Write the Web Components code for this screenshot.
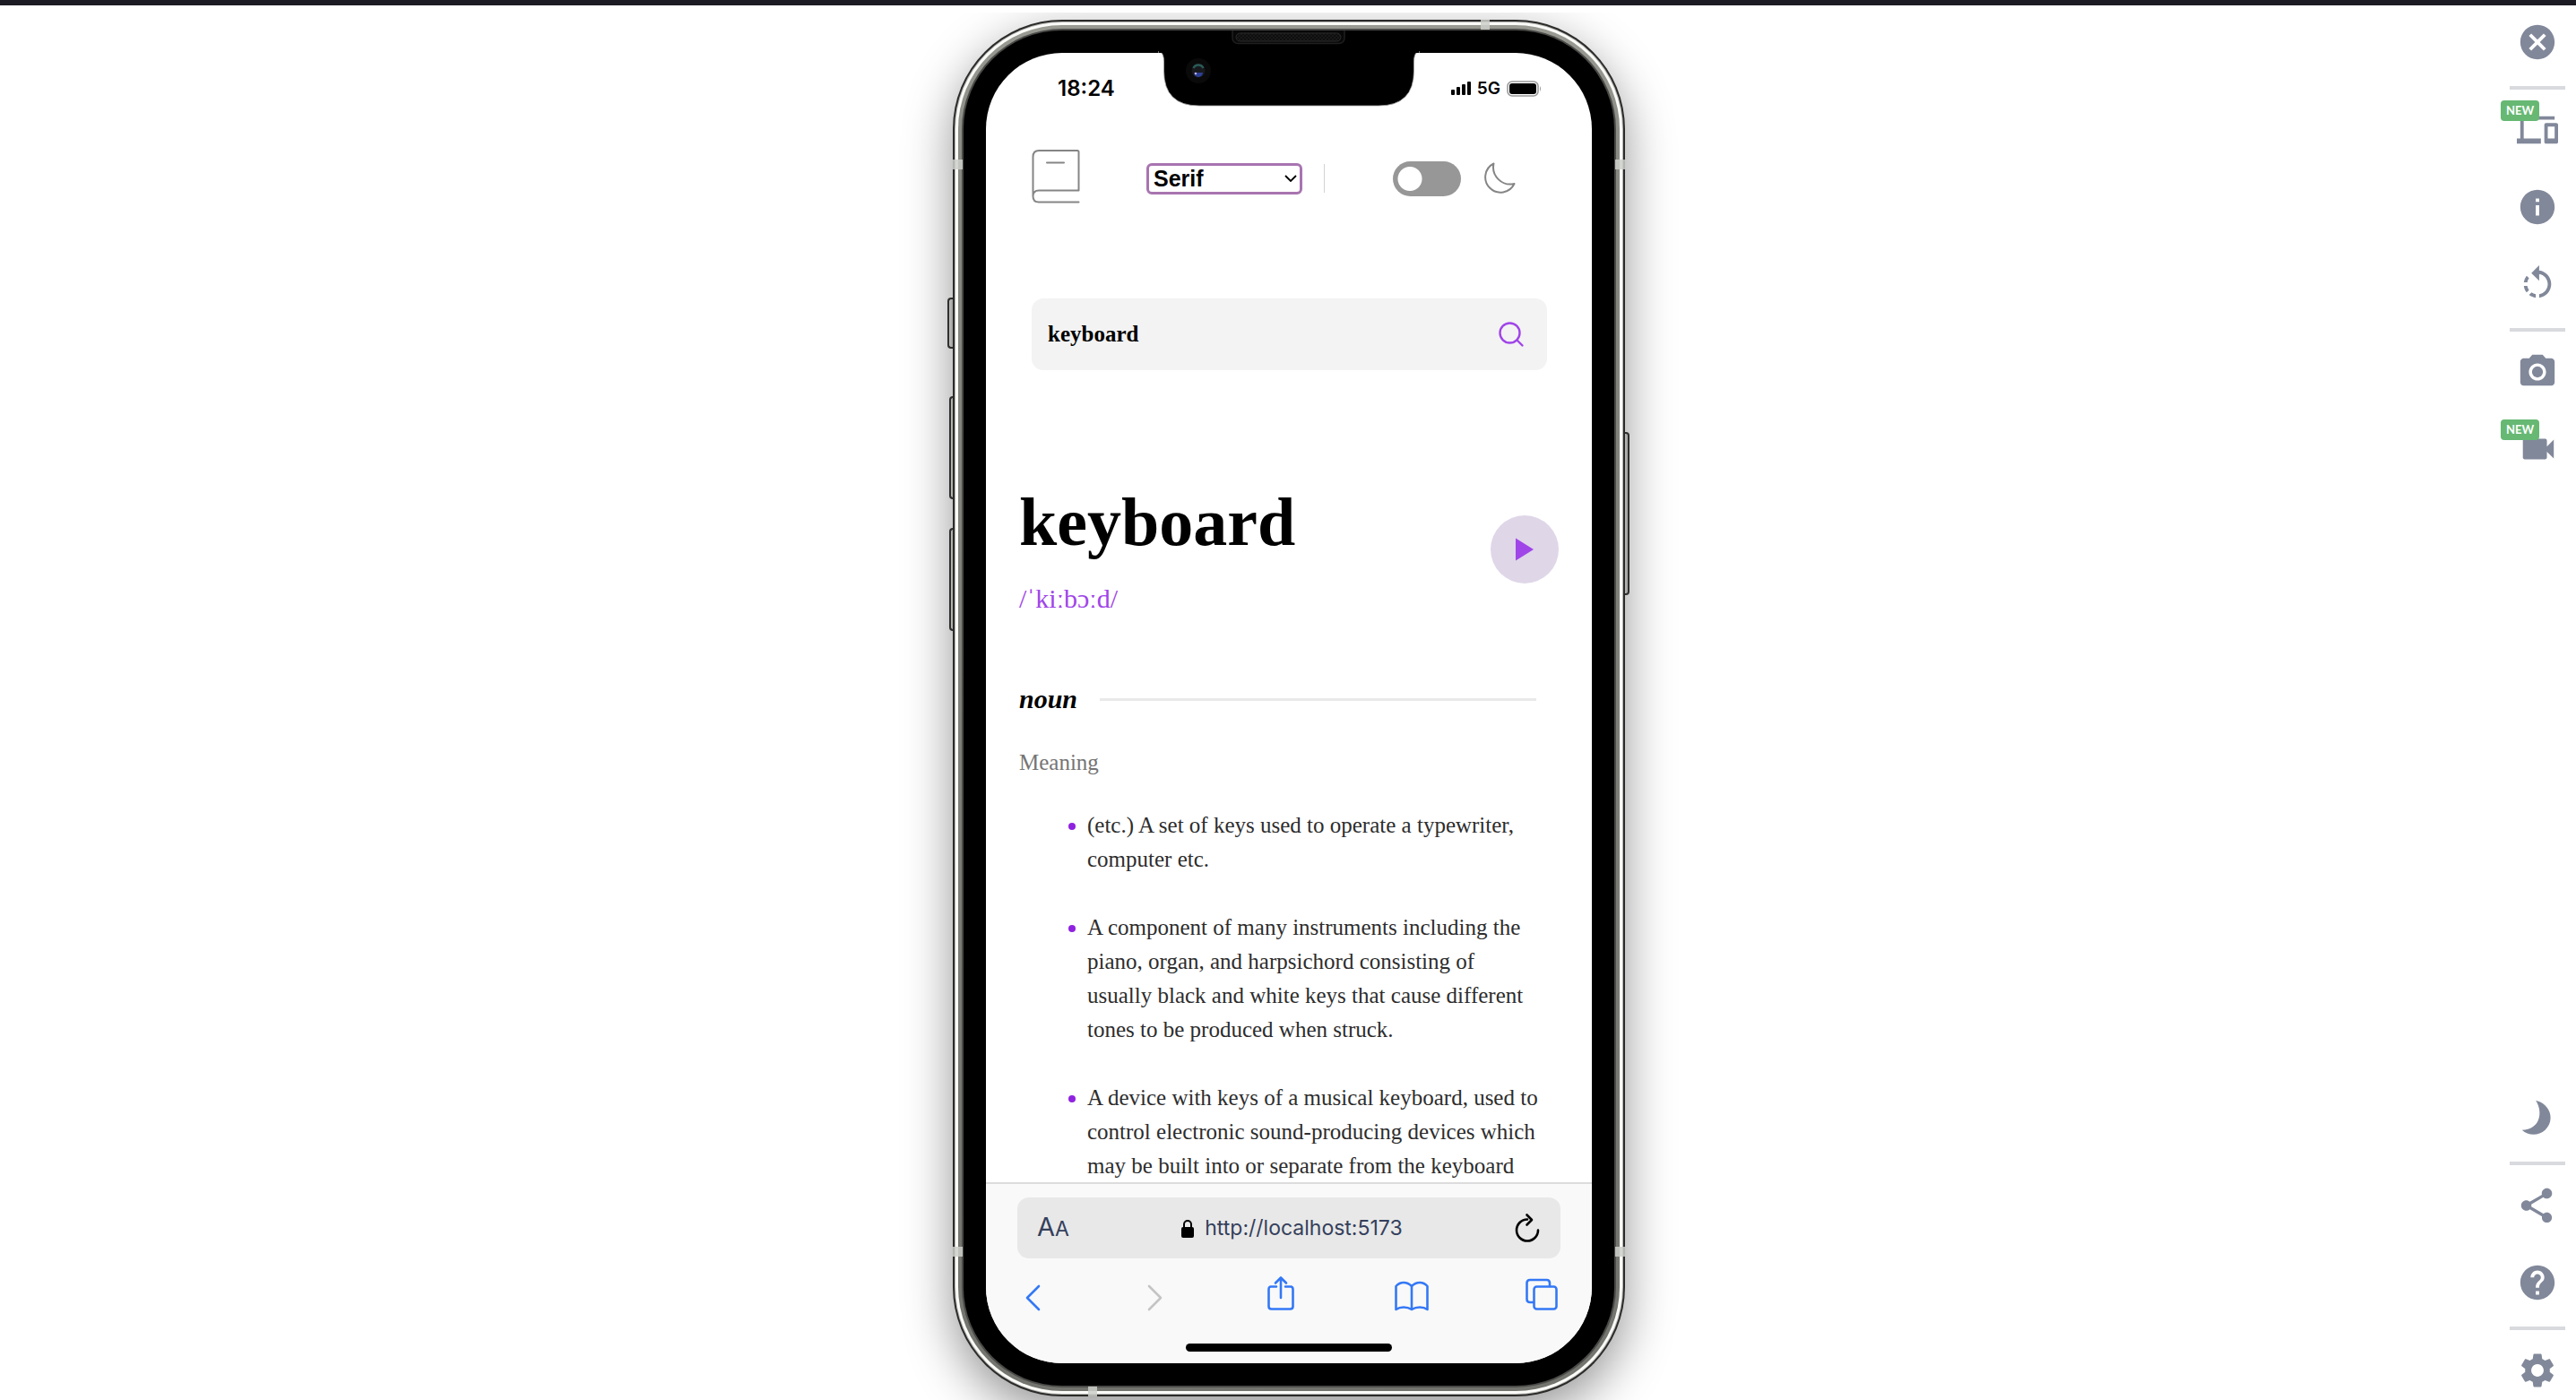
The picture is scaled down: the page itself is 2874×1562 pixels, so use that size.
<!DOCTYPE html>
<html lang="en">
<head>
<meta charset="utf-8">
<title>Mobile simulator</title>
<style>
  body { margin: 0; background: #fff; overflow: hidden; font-family: "Liberation Sans", Arial, sans-serif; }
</style>
</head>
<body>
<simulator-page>
  <phone-device>
    <dictionary-app></dictionary-app>
  </phone-device>
  <tool-rail slot="tools"></tool-rail>
</simulator-page>

<script>
const define = (name, html) => {
  const template = document.createElement('template');
  template.innerHTML = html;
  customElements.define(name, class extends HTMLElement {
    constructor() {
      super();
      this.attachShadow({ mode: 'open' }).append(template.content.cloneNode(true));
    }
  });
};
const reset = `*{box-sizing:border-box} button{border:0;padding:0;margin:0;background:none;font:inherit;color:inherit;cursor:pointer;display:block} svg{display:block}`;

define('simulator-page', `
<style>${reset}
  :host { display: flex; flex-direction: column; height: 100vh; border-top: 6px solid #1c1a22; padding-top: 8px; box-sizing: border-box; }
  main { flex: 1; min-height: 0; display: grid; grid-template-columns: 1fr auto 1fr; padding: 8px 0 4px 2px; overflow: hidden; }
  .device { grid-column: 2; min-height: 0; }
  aside { grid-column: 3; justify-self: end; margin-top: -8px; min-height: 0; }
</style>
<main><div class="device"><slot></slot></div><aside><slot name="tools"></slot></aside></main>`);

define('phone-device', `
<style>${reset}
  :host { display: block; position: relative; height: calc(100vh - 26px); aspect-ratio: 750 / 1536; }
  .rim { position: relative; height: 100%; border-radius: 122px; padding: 2px; background: #2b2b2a; box-shadow: 0 18px 54px rgba(0,0,0,.42); }
  .shine { height: 100%; border-radius: 120px; padding: 1px; background: #b4b4b0; }
  .white { height: 100%; border-radius: 119px; padding: 3px; background: #fafaf8; }
  .steel { height: 100%; border-radius: 116px; padding: 4px; background: linear-gradient(#999b93, #878980 12%, #73746e); }
  .edge { height: 100%; border-radius: 112px; padding: 2px; background: #4a4a48; }
  .bezel { height: 100%; border-radius: 110px; padding: 25px; background: #000; }
  .screen { position: relative; height: 100%; border-radius: 85px; background: #fff; overflow: hidden; display: flex; flex-direction: column; }
  .content { flex: 1; min-height: 0; overflow: hidden; }
  .key { position: absolute; border: 2px solid #3b3b3a; background: linear-gradient(90deg, #e9e9e6, #c9c9c6); }
  .key.l { border-right: 0; border-radius: 4px 0 0 4px; }
  .key.r { border-left: 0; border-radius: 0 4px 4px 0; left: 100%; width: 5px; }
  .mute { left: -6px; width: 7px; top: 310px; height: 57px; }
  .up { left: -4px; width: 5px; top: 420px; height: 115px; }
  .down { left: -4px; width: 5px; top: 567px; height: 115px; }
  .power { top: 460px; height: 182px; }
  .band { position: absolute; background: rgba(205,207,202,.85); }
  .side { width: 11px; height: 11px; }
  .cap { width: 10px; height: 11px; }
  .notch { position: absolute; top: 11px; left: 50%; margin-left: -150px; z-index: 2; }
  .status { flex: none; height: 79px; display: flex; align-items: center; justify-content: space-between; padding: 0 56px 0 80px; font-family: Inter, sans-serif; }
  .time { font-size: 24px; font-weight: 600; line-height: 30px; }
  .signals { display: flex; align-items: center; gap: 7px; font-size: 19px; font-weight: 600; line-height: 24px; }
</style>
<span class="key l mute"></span><span class="key l up"></span><span class="key l down"></span><span class="key r power"></span>
<div class="rim"><div class="shine"><div class="white"><div class="steel"><div class="edge"><div class="bezel">
  <div class="screen">
    <div class="status">
      <span class="time">18:24</span>
      <span class="signals">
        <svg width="22" height="15" viewBox="0 0 22 15"><rect x="0" y="9" width="4" height="6" rx="1"/><rect x="6" y="6" width="4" height="9" rx="1"/><rect x="12" y="3" width="4" height="12" rx="1"/><rect x="18" y="0" width="4" height="15" rx="1"/></svg>
        <span>5G</span>
        <svg width="39" height="18" viewBox="0 0 39 18"><rect x="1" y="1" width="34" height="16" rx="5" fill="none" stroke="#999" stroke-width="1.6"/><rect x="3" y="3" width="30" height="12" rx="3"/><path d="M37 6q2 3 0 6z" fill="#999"/></svg>
      </span>
    </div>
    <div class="content"><slot></slot></div>
    <safari-bar></safari-bar>
  </div>
</div></div></div></div></div></div>
<span class="band side" style="left:0;top:156px"></span><span class="band side" style="right:0;top:156px"></span>
<span class="band side" style="left:0;bottom:156px"></span><span class="band side" style="right:0;bottom:156px"></span>
<span class="band cap" style="right:151px;top:0"></span><span class="band cap" style="left:151px;bottom:0"></span>
<svg class="notch" width="300" height="90" viewBox="0 0 300 90">
  <defs><pattern id="mesh" width="4" height="4" patternUnits="userSpaceOnUse"><rect width="4" height="4" fill="#0e0e0e"/><circle cx="1" cy="1" r=".8" fill="#262626"/><circle cx="3" cy="3" r=".8" fill="#262626"/></pattern></defs>
  <path d="M4 25H6Q10.500 26 10.500 36V46Q10.500 85 50 85H250Q289.500 85 289.500 46V36Q289.500 26 294 25H296Z" fill="#000" stroke="#aaa" stroke-width=".8"/>
  <rect x="5" y="3" width="290" height="23" fill="#000"/>
  <path d="M87 1V9Q87 15.500 94 15.500H205Q212 15.500 212 9V1" fill="#080808" stroke="#1f1f1f" stroke-width="1.500"/>
  <rect x="91" y="4" width="117" height="9" rx="4.500" fill="url(#mesh)" stroke="#2b2b2b" stroke-width="1"/>
  <circle cx="49" cy="46" r="14" fill="#0a0a0b"/><circle cx="49" cy="46" r="7.500" fill="#17191d"/>
  <path d="M43.500 43a6 6 0 0 1 11 0" fill="none" stroke="#2b5a56" stroke-width="2.500"/><path d="M44 48a5 5 0 0 0 10 0z" fill="#2c3f94"/><circle cx="46" cy="49" r="1.200" fill="#cdb4e6"/>
</svg>`);

define('safari-bar', `
<style>${reset}
  :host { flex: none; display: flex; flex-direction: column; align-items: stretch; height: 202px; box-sizing: border-box; border-top: 2px solid #dcdcdc; background: #f9f9f9; padding: 15px 35px 0; font-family: Inter, sans-serif; color: #34405c; }
  .address { height: 68px; border-radius: 13px; background: #e8e8e8; display: flex; justify-content: space-between; align-items: center; padding: 0 23px 0 22px; }
  .text { font-size: 29px; line-height: 36px; }
  .text small { font-size: 23px; }
  .url { display: flex; align-items: center; gap: 12px; font-size: 23px; line-height: 32px; }
  nav { display: grid; grid-template-columns: 136fr 134fr 143fr 146fr 35fr; padding: 19px 3px 0 9px; color: #3478f6; }
  svg.line { fill: none; stroke: currentColor; stroke-width: 2.600; stroke-linecap: round; stroke-linejoin: round; }
  .off { color: #c4c4c6; }
  .home { width: 230px; height: 9px; border-radius: 5px; background: #000; margin: 36px auto 0; }
</style>
<div class="address">
  <button class="text" aria-label="Text size">A<small>A</small></button>
  <span class="url"><svg width="14" height="21" viewBox="0 0 14 21"><path d="M3 10V6a4 4 0 0 1 8 0v4" fill="none" stroke="#000" stroke-width="2"/><rect y="9" width="14" height="12" rx="2"/></svg><span>http://localhost:5173</span></span>
  <button class="reload" aria-label="Reload"><svg class="line" style="color:#000" width="28" height="34" viewBox="0 0 28 34"><path d="M14 7.500A12 12 0 1 0 26 19.500M13.500 2.500l5.500 5.500-5.500 5.500"/></svg></button>
</div>
<nav aria-label="Browser">
  <button aria-label="Back"><svg class="line" width="17" height="40" viewBox="0 0 17 40"><path d="M15 12L2 25l13 13"/></svg></button>
  <button class="off" aria-label="Forward" disabled><svg class="line" width="17" height="40" viewBox="0 0 17 40"><path d="M2 12l13 13L2 38"/></svg></button>
  <button aria-label="Share"><svg class="line" width="30" height="40" viewBox="0 0 30 40"><path d="M10 12.500H4q-2.500 0-2.500 3V34.500q0 3 3 3h21q3 0 3-3V15.500q0-3-2.500-3h-6M15 25V3M9 8.500L15 2.500l6 6"/></svg></button>
  <button aria-label="Bookmarks"><svg class="line" width="38" height="40" viewBox="0 0 38 40"><path d="M19 12Q15 8 10 8T1.500 12V38Q5 35.500 10 35.500T19 38Q23 35.500 28 35.500T36.500 38V12Q33 8 28 8T19 12ZM19 12V38"/></svg></button>
  <button aria-label="Tabs"><svg class="line" width="36" height="40" viewBox="0 0 36 40"><rect x="9.500" y="12.500" width="25" height="25" rx="3"/><path d="M9 30H5q-3.500 0-3.500-3.500V8.500Q1.500 5 5 5H23.500Q27 5 27 8.500V12"/></svg></button>
</nav>
<div class="home"></div>`);

define('dictionary-app', `
<style>${reset}
  :host { display: block; font-family: "Liberation Serif", "Times New Roman", serif; color: #000; }
  header { display: flex; align-items: center; padding: 28px 0 0 51px; }
  select { appearance: none; width: 174px; height: 35px; margin-left: 74px; padding: 0 5px; border: 3px solid #a874b0; border-radius: 6px; background: #fff url("data:image/svg+xml,%3Csvg xmlns='http://www.w3.org/2000/svg' width='14' height='8'%3E%3Cpath d='M1 1l6 6 6-6' fill='none' stroke='%23000' stroke-width='1.8'/%3E%3C/svg%3E") no-repeat right 3px center; font: bold 25px/29px "Liberation Sans", Arial, sans-serif; color: #000; }
  .rule { width: 1px; height: 32px; background: #d3d3d3; margin-left: 24px; }
  .switch { appearance: none; width: 76px; height: 39px; margin: 0 0 0 76px; border-radius: 20px; background: radial-gradient(circle at 19px 50%, #fff 13px, #979797 14px); }
  .moon { margin-left: 25px; }
  form { height: 80px; margin: 101px 50px 0 51px; padding: 0 24px 0 18px; border-radius: 13px; background: #f3f3f3; display: flex; align-items: center; }
  input[type=search] { appearance: none; flex: 1; min-width: 0; border: 0; padding: 0; background: none; outline: 0; font: bold 25px/32px "Liberation Serif", serif; color: #000; }
  .word { display: flex; align-items: center; justify-content: space-between; margin-top: 125px; padding: 0 37px; }
  h1 { margin: 0; font-size: 76px; line-height: 88px; }
  .phonetic { margin: 22px 0 0; font-size: 30px; line-height: 40px; color: #a045e8; }
  h2 { margin: 72px 62px 0 37px; display: flex; align-items: center; gap: 25px; font-size: 30px; line-height: 40px; font-style: italic; }
  h2::after { content: ""; flex: 1; height: 3px; background: #e9e9e9; }
  h3 { margin: 32px 37px 0; font-size: 25px; line-height: 38px; font-weight: 400; color: #757575; }
  ul { list-style: none; margin: 32px 57px 0 0; padding: 0 0 0 92px; font-size: 25px; line-height: 38px; color: #2d2d2d; }
  li { display: flex; gap: 13px; margin-bottom: 38px; }
  li::before { content: ""; flex: none; width: 8px; height: 8px; margin-top: 16px; border-radius: 50%; background: #8f22e0; }
</style>
<header>
  <svg width="54" height="66" viewBox="0 0 54 66" fill="none" stroke="#858585" stroke-width="2" stroke-linecap="round" stroke-linejoin="round"><path d="M52.500 59.500H8Q1.500 59.500 1.500 53V9Q1.500 2 8 2H51Q52.500 2 52.500 3.500V46.500H8Q1.500 46.500 1.500 53M17 15.500H36"/></svg>
  <select aria-label="Font"><option>Serif</option><option>Sans Serif</option><option>Mono</option></select>
  <span class="rule"></span>
  <input class="switch" type="checkbox" role="switch" aria-label="Dark theme">
  <svg class="moon" width="36" height="36" viewBox="0 0 36 36" fill="none" stroke="#858585" stroke-width="2" stroke-linejoin="round"><path d="M11.500 1.500A19 19 0 0 0 34.500 24A17 17 0 1 1 11.500 1.500Z"/></svg>
</header>
<form role="search">
  <input type="search" aria-label="Word" value="keyboard">
  <button type="button" aria-label="Search"><svg width="32" height="32" viewBox="0 0 32 32" fill="none" stroke="#a045e8" stroke-width="2.400" stroke-linecap="round"><circle cx="14.500" cy="14.500" r="11"/><path d="M22.500 22.500L28.500 28.500"/></svg></button>
</form>
<section class="word">
  <div><h1>keyboard</h1><p class="phonetic">/ˈkiːbɔːd/</p></div>
  <button aria-label="Play pronunciation"><svg width="76" height="76" viewBox="0 0 76 76"><circle cx="38" cy="38" r="38" fill="#dfd6e8"/><path d="M28 25.500V50.500L48 38Z" fill="#a045e8"/></svg></button>
</section>
<h2>noun</h2>
<h3>Meaning</h3>
<ul>
  <li>(etc.) A set of keys used to operate a typewriter, computer etc.</li>
  <li>A component of many instruments including the piano, organ, and harpsichord consisting of usually black and white keys that cause different tones to be produced when struck.</li>
  <li>A device with keys of a musical keyboard, used to control electronic sound-producing devices which may be built into or separate from the keyboard</li>
</ul>`);

define('new-badge', `
<style>
  :host { position: absolute; left: -18px; top: -10px; display: block; width: 43px; border-radius: 4px; background: #66b873; color: #fff; font: 700 13px/23px Lato, sans-serif; text-align: center; }
</style><slot></slot>`);

define('tool-rail', `
<style>${reset}
  :host { display: flex; flex-direction: column; justify-content: space-between; height: calc(100vh - 14px); padding: 10px 12px 10px 0; box-sizing: border-box; color: #81889a; }
  div { display: flex; flex-direction: column; align-items: center; gap: 40px; width: 62px; }
  hr { width: 62px; height: 4px; margin: -14px 0 -18px; border: 0; background: #d9dade; }
  button { position: relative; width: 46px; height: 46px; }
  svg { width: 46px; height: 46px; fill: currentColor; }
</style>
<div>
  <button aria-label="Close"><svg viewBox="0 0 24 24"><path d="M12 2C6.470 2 2 6.470 2 12s4.470 10 10 10 10-4.470 10-10S17.530 2 12 2zm5 13.590L15.590 17 12 13.410 8.410 17 7 15.590 10.590 12 7 8.410 8.410 7 12 10.590 15.590 7 17 8.410 13.410 12 17 15.590z"/></svg></button>
  <hr>
  <button aria-label="Devices"><svg viewBox="0 0 24 24"><path d="M4 6h18V4H4c-1.100 0-2 .9-2 2v11H0v3h14v-3H4V6zm19 2h-6c-.550 0-1 .450-1 1v10c0 .550.450 1 1 1h6c.550 0 1-.450 1-1V9c0-.550-.450-1-1-1zm-1 9h-4v-7h4v7z"/></svg><new-badge>NEW</new-badge></button>
  <button aria-label="Information"><svg viewBox="0 0 24 24"><path d="M12 2C6.480 2 2 6.480 2 12s4.480 10 10 10 10-4.480 10-10S17.520 2 12 2zm1 15h-2v-6h2v6zm0-8h-2V7h2v2z"/></svg></button>
  <button aria-label="Rotate"><svg viewBox="0 0 24 24"><path d="M7.110 8.530L5.700 7.110C4.800 8.270 4.240 9.610 4.070 11h2.020c.14-.870.490-1.720 1.020-2.470zM6.090 13H4.070c.17 1.390.720 2.730 1.620 3.890l1.410-1.420c-.520-.750-.870-1.590-1.010-2.470zm1.010 5.320c1.160.9 2.510 1.440 3.900 1.610V17.900c-.870-.150-1.710-.490-2.460-1.030L7.100 18.320zM13 4.070V1L8.450 5.550 13 10V6.090c2.840.480 5 2.940 5 5.910s-2.160 5.430-5 5.910v2.020c3.950-.490 7-3.850 7-7.930s-3.050-7.440-7-7.930z"/></svg></button>
  <hr>
  <button aria-label="Screenshot"><svg viewBox="0 0 24 24"><circle cx="12" cy="12" r="3.200"/><path d="M9 2L7.170 4H4c-1.100 0-2 .9-2 2v12c0 1.100.9 2 2 2h16c1.100 0 2-.9 2-2V6c0-1.100-.9-2-2-2h-3.170L15 2H9zm3 15c-2.760 0-5-2.240-5-5s2.240-5 5-5 5 2.240 5 5-2.240 5-5 5z"/></svg></button>
  <button aria-label="Record video"><svg viewBox="0 0 24 24"><path d="M17 10.500V7c0-.550-.450-1-1-1H4c-.550 0-1 .450-1 1v10c0 .550.450 1 1 1h12c.550 0 1-.450 1-1v-3.500l4 4v-11l-4 4z" transform="translate(.5 0)"/></svg><new-badge>NEW</new-badge></button>
</div>
<div>
  <button aria-label="Dark mode"><svg viewBox="0 0 24 24"><path d="M11 2C15.500 9 13.500 19 3 19.200C6.500 22.500 12.500 22.800 16.500 19.200C22.500 13.500 19.500 4 11 2Z"/></svg></button>
  <hr>
  <button aria-label="Share"><svg viewBox="0 0 24 24"><path d="M18 16.080c-.760 0-1.440.3-1.960.770L8.910 12.700c.050-.230.090-.460.090-.7s-.040-.470-.090-.7l7.050-4.110c.540.5 1.250.810 2.040.810 1.660 0 3-1.340 3-3s-1.340-3-3-3-3 1.340-3 3c0 .240.040.470.090.7L8.040 9.810C7.500 9.310 6.790 9 6 9c-1.660 0-3 1.340-3 3s1.340 3 3 3c.790 0 1.500-.310 2.040-.810l7.120 4.160c-.050.210-.080.430-.080.650 0 1.610 1.310 2.920 2.920 2.920s2.920-1.310 2.920-2.920-1.310-2.920-2.920-2.920z" transform="translate(-.5 0)"/></svg></button>
  <button aria-label="Help"><svg viewBox="0 0 24 24"><path d="M12 2C6.480 2 2 6.480 2 12s4.480 10 10 10 10-4.480 10-10S17.520 2 12 2zm1 17h-2v-2h2v2zm2.070-7.750l-.9.920C13.450 12.900 13 13.500 13 15h-2v-.5c0-1.100.450-2.100 1.170-2.830l1.240-1.260c.370-.360.590-.860.590-1.410 0-1.100-.9-2-2-2s-2 .9-2 2H8c0-2.210 1.790-4 4-4s4 1.790 4 4c0 .880-.360 1.680-.930 2.250z"/></svg></button>
  <hr>
  <button aria-label="Settings"><svg viewBox="0 0 24 24"><path d="M19.140 12.940c.040-.3.060-.610.060-.940 0-.320-.020-.640-.070-.940l2.030-1.580c.180-.140.230-.410.120-.610l-1.920-3.320c-.120-.220-.370-.290-.590-.220l-2.390.960c-.5-.380-1.030-.7-1.620-.940l-.360-2.540c-.040-.240-.240-.410-.480-.410h-3.840c-.240 0-.430.170-.470.410l-.360 2.540c-.590.240-1.130.570-1.620.940l-2.390-.960c-.220-.080-.470 0-.590.220L2.740 8.870c-.120.210-.080.470.120.610l2.030 1.580c-.050.3-.090.630-.090.940s.020.640.070.940l-2.030 1.580c-.180.140-.230.410-.120.610l1.920 3.320c.120.220.370.290.590.220l2.390-.960c.5.380 1.030.7 1.620.940l.360 2.540c.050.240.240.410.480.410h3.840c.240 0 .440-.170.470-.410l.360-2.540c.590-.240 1.130-.560 1.620-.940l2.390.960c.220.080.470 0 .590-.220l1.920-3.320c.120-.220.070-.470-.120-.610l-2.010-1.580zM12 15.600c-1.980 0-3.600-1.620-3.600-3.600s1.620-3.600 3.600-3.600 3.600 1.620 3.600 3.600-1.620 3.600-3.600 3.600z"/></svg></button>
</div>`);
</script>
</body>
</html>
